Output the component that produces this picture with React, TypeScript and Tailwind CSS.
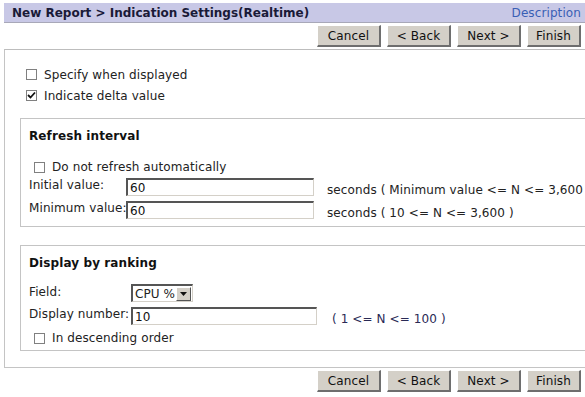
import React from "react";

const Btn = ({ children, w }: { children: React.ReactNode; w: string }) => (
  <div
    className={`${w} h-[22px] flex items-center justify-center bg-[#d4d0c8] text-[#111] border-t border-l border-t-[#ffffff] border-l-[#ffffff] border-b-2 border-r-2 border-b-[#6e6e6e] border-r-[#6e6e6e] text-[12px]`}
  >
    {children}
  </div>
);

const Buttons = () => (
  <div className="flex justify-end gap-[6px] pr-[4px]">
    <Btn w="w-[64px]">Cancel</Btn>
    <Btn w="w-[64px]">&lt; Back</Btn>
    <Btn w="w-[64px]">Next &gt;</Btn>
    <Btn w="w-[54px]">Finish</Btn>
  </div>
);

const Check = ({ checked }: { checked?: boolean }) => (
  <div className="w-[11px] h-[11px] border border-[#808080] bg-white flex items-center justify-center shrink-0">
    {checked && (
      <svg width="9" height="9" viewBox="0 0 9 9">
        <path d="M1 4 L3.5 6.5 L8 1.5" stroke="#111" strokeWidth="1.8" fill="none" />
      </svg>
    )}
  </div>
);

const Input = ({ value, w }: { value: string; w: string }) => (
  <div
    className={`${w} h-[18px] shrink-0 bg-white border-t-2 border-l-2 border-t-[#555] border-l-[#555] border-b border-r border-b-[#d4d0c8] border-r-[#d4d0c8] flex items-center pl-[2px] text-[12px] text-[#111]`}
  >
    {value}
  </div>
);

export default function App() {
  return (
    <div
      className="w-[585px] h-[397px] bg-white overflow-hidden text-[12px] text-[#222] tracking-[0.1px]"
      style={{ fontFamily: "'DejaVu Sans', Verdana, sans-serif" }}
    >
      <div className="pt-[3px] pl-[4px]">
        <div className="h-[20px] bg-[#c8c8e6] border-b border-[#a8a8b8] flex items-center justify-between pl-[8px] pr-[4px]">
          <span className="font-bold text-[12px] text-[#1a1a38] tracking-[0px]">
            New Report &gt; Indication Settings(Realtime)
          </span>
          <span className="text-[#3a5fb5] text-[12px]">Description</span>
        </div>
      </div>
      <div className="mt-[2px]">
        <Buttons />
      </div>
      <div className="ml-[4px] mt-[2px] w-[600px] h-[319px] border border-[#c4c4c4] border-t-[#bdbdbd]">
        <div className="pt-[14px] pl-[21px] flex flex-col">
          <div className="h-[21px] flex items-center gap-[7px]">
            <Check />
            <span>Specify when displayed</span>
          </div>
          <div className="h-[21px] flex items-center gap-[7px]">
            <Check checked />
            <span>Indicate delta value</span>
          </div>
        </div>
        <div className="ml-[15px] mt-[12px] h-[109px] border border-[#c4c4c4] pl-[8px]">
          <div className="pt-[8px] h-[30px] font-bold text-[#111]">Refresh interval</div>
          <div className="mt-[10px] h-[16px] flex items-center gap-[7px] pl-[5px]">
            <Check />
            <span>Do not refresh automatically</span>
          </div>
          <div className="flex items-start mt-[3px] h-[23px]">
            <span className="w-[97px] shrink-0 whitespace-nowrap leading-[14px]">Initial value:</span>
            <Input value="60" w="w-[188px]" />
            <span className="ml-[13px] mt-[3px] whitespace-nowrap">seconds ( Minimum value &lt;= N &lt;= 3,600 )</span>
          </div>
          <div className="flex items-start h-[20px]">
            <span className="w-[97px] shrink-0 whitespace-nowrap leading-[14px]">Minimum value:</span>
            <Input value="60" w="w-[188px]" />
            <span className="ml-[13px] mt-[3px] whitespace-nowrap">seconds ( 10 &lt;= N &lt;= 3,600 )</span>
          </div>
        </div>
        <div className="ml-[15px] mt-[18px] h-[106px] border border-[#c4c4c4] pl-[8px]">
          <div className="pt-[8px] h-[30px] font-bold text-[#111]">Display by ranking</div>
          <div className="flex items-start mt-[8px] h-[23px]">
            <span className="w-[102px] shrink-0 leading-[14px] mt-[1px]">Field:</span>
            <div className="w-[62px] h-[18px] border-t-2 border-l-2 border-t-[#555] border-l-[#555] border-b border-r border-b-[#d4d0c8] border-r-[#d4d0c8] flex items-center bg-white">
              <span className="pl-[2px] flex-1 whitespace-nowrap">CPU %</span>
              <div className="w-[15px] h-[14px] mr-[1px] shrink-0 bg-[#d4d0c8] border-t border-l border-t-white border-l-white border-b border-r border-b-[#555] border-r-[#555] flex items-center justify-center">
                <svg width="7" height="4" viewBox="0 0 7 4">
                  <path d="M0 0 L7 0 L3.5 4 Z" fill="#111" />
                </svg>
              </div>
            </div>
          </div>
          <div className="flex items-start h-[20px]">
            <span className="w-[102px] shrink-0 whitespace-nowrap leading-[14px]">Display number:</span>
            <Input value="10" w="w-[186px]" />
            <span className="ml-[15px] mt-[3px] whitespace-nowrap text-[#2a2a55]">( 1 &lt;= N &lt;= 100 )</span>
          </div>
          <div className="mt-[3px] h-[16px] flex items-center gap-[7px] pl-[5px]">
            <Check />
            <span>In descending order</span>
          </div>
        </div>
      </div>
      <div className="mt-[2px]">
        <Buttons />
      </div>
    </div>
  );
}
